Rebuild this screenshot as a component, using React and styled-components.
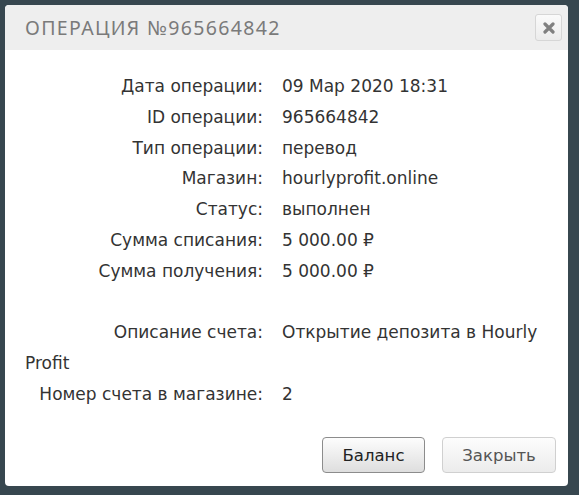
import React from 'react'
import styled, { createGlobalStyle } from 'styled-components';

const Global = createGlobalStyle`
    html, body {
        margin: 0;
        padding: 0;
        background: #37474f;
    }
`

//styled Components
const Page = styled.div`
    width: 579px;
    height: 495px;
    padding: 5px 11px 0 5px;
    box-sizing: border-box;
    background-color: #37474f;
`
const Modal = styled.div`
    background: #fff;
    border-radius: 4px;
    overflow: hidden;
    height: 481px;
    display: flex;
    flex-direction: column;
`
const Header = styled.div`
    height: 45px;
    background: #eeeeee;
    display: flex;
    align-items: center;
    justify-content: space-between;
    padding: 0 6px 0 20px;
`
const Title = styled.h2`
    margin: 0;
    font-family: "Noto Sans", sans-serif;
    font-weight: 400;
    font-size: 19.5px;
    letter-spacing: 1.35px;
    color: #7a7a7a;
`
const CloseBtn = styled.div`
    width: 25px;
    height: 25px;
    border: 1px solid #d6d6d6;
    border-radius: 3px;
    background: linear-gradient(#fafafa, #ececec);
    display: flex;
    align-items: center;
    justify-content: center;
`
const Body = styled.div`
    flex: 1;
    padding: 21px 20px 0 20px;
    font-family: "DejaVu Sans", sans-serif;
    font-size: 17px;
    color: #333;
`
const Row = styled.div`
    line-height: 30.8px;
`
const Spacer = styled.div`
    height: 30.8px;
`
const Label = styled.span`
    display: inline-block;
    width: 238px;
    text-align: right;
    margin-right: 19px;
`
const Footer = styled.div`
    display: flex;
    justify-content: flex-end;
    gap: 17px;
    padding: 0 12px 13px 0;
`
const Button = styled.button`
    width: ${p => p.$w}px;
    height: 36px;
    border-radius: 4px;
    border: 1px solid ${p => p.$primary ? '#8c8c8c' : '#d0d0d0'};
    background: ${p => p.$primary
        ? 'linear-gradient(#fdfdfd, #dedede)'
        : 'linear-gradient(#fdfdfd, #ececec)'};
    color: ${p => p.$primary ? '#222' : '#555'};
    font-family: "DejaVu Sans", sans-serif;
    font-size: 16.5px;
    padding: 0;
`

const rows = [
    ['Дата операции:', '09 Мар 2020 18:31'],
    ['ID операции:', '965664842'],
    ['Тип операции:', 'перевод'],
    ['Магазин:', 'hourlyprofit.online'],
    ['Статус:', 'выполнен'],
    ['Сумма списания:', '5 000.00 ₽'],
    ['Сумма получения:', '5 000.00 ₽'],
]

const App = () => {
  return (
   <Page>
        <Global />
        <Modal>
            <Header>
                <Title>ОПЕРАЦИЯ №965664842</Title>
                <CloseBtn>
                    <svg width="12" height="12" viewBox="0 0 12 12">
                        <path d="M2 2 L10 10 M10 2 L2 10" stroke="#808080" strokeWidth="3.2" strokeLinecap="round" />
                    </svg>
                </CloseBtn>
            </Header>
            <Body>
                {rows.map(([l, v]) => (
                    <Row key={l}><Label>{l}</Label>{v}</Row>
                ))}
                <Spacer />
                <Row><Label>Описание счета:</Label>Открытие депозита в Hourly Profit</Row>
                <Row><Label>Номер счета в магазине:</Label>2</Row>
            </Body>
            <Footer>
                <Button $primary $w={103}>Баланс</Button>
                <Button $w={114}>Закрыть</Button>
            </Footer>
        </Modal>
   </Page>
  )
}

export default App
